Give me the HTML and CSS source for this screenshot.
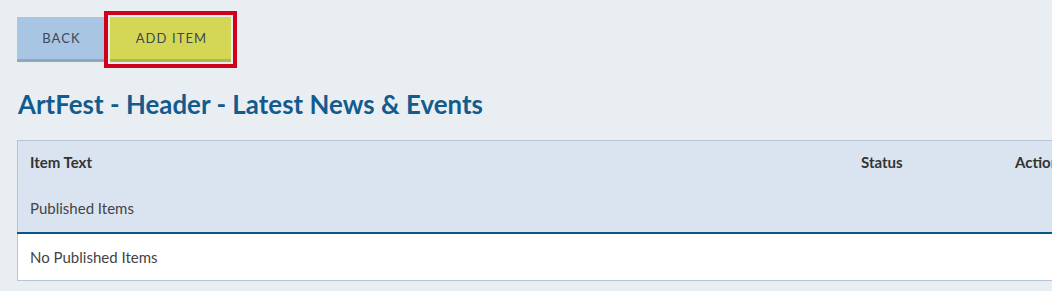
FILE: index.html
```html
<!DOCTYPE html>
<html>
<head>
<meta charset="utf-8">
<link rel="stylesheet" href="styles.css">
</head>
<body>
<div class="page">
  <div class="actions">
    <a class="btn btn-back">Back</a>
    <a class="btn btn-add">Add Item</a>
  </div>
  <h1 class="title">ArtFest - Header - Latest News &amp; Events</h1>
  <table class="items">
    <thead>
      <tr class="head-row">
        <th class="col-text">Item Text</th>
        <th class="col-status">Status</th>
        <th class="col-action">Actions</th>
      </tr>
      <tr class="group-row">
        <td colspan="3">Published Items</td>
      </tr>
    </thead>
    <tbody>
      <tr class="empty-row">
        <td colspan="3">No Published Items</td>
      </tr>
    </tbody>
  </table>
</div>
</body>
</html>
```
FILE: styles.css
```css
html, body {
  margin: 0;
  padding: 0;
  background: #e9eef3;
  overflow: hidden;
}
body {
  font-family: Lato, "Open Sans", sans-serif;
  color: #3c3c3c;
}
.page {
  padding: 17px 0 0 17px;
}
.actions {
  display: flex;
  gap: 6px;
  height: 45px;
}
.btn {
  box-sizing: border-box;
  height: 45px;
  display: flex;
  align-items: center;
  justify-content: center;
  font-size: 13px;
  letter-spacing: 1.1px;
  text-transform: uppercase;
  color: #3d4756;
  border-bottom: 3px solid;
}
.btn-back {
  width: 87px;
  padding-left: 2px;
  background: #a8c5e3;
  border-bottom-color: #8fa6be;
}
.btn-add {
  width: 121px;
  padding-left: 2px;
  background: #d4d755;
  border-bottom-color: #b3b548;
  outline: 4px solid #d0021b;
  outline-offset: 2px;
}
.title {
  margin: 27px 0 0 1px;
  font-size: 25.8px;
  font-weight: 700;
  color: #135b8c;
  line-height: 30px;
  letter-spacing: 0.05px;
}
.items {
  margin-top: 21px;
  width: 1060px;
  border-collapse: collapse;
  border: 1px solid #b5c5d6;
  font-size: 15px;
}
.items th, .items td {
  text-align: left;
  padding: 0 0 0 12px;
}
.head-row th {
  height: 42px;
  font-weight: 700;
  color: #333;
  background: #d9e4f0;
  vertical-align: middle;
}
.col-text { width: 819px; }
.col-status { width: 142px; }
.group-row td {
  height: 49px;
  background: #d9e4f0;
  color: #444;
  border-bottom: 2px solid #0d5585;
}
.empty-row td {
  height: 46px;
  background: #fff;
  color: #444;
}
```
